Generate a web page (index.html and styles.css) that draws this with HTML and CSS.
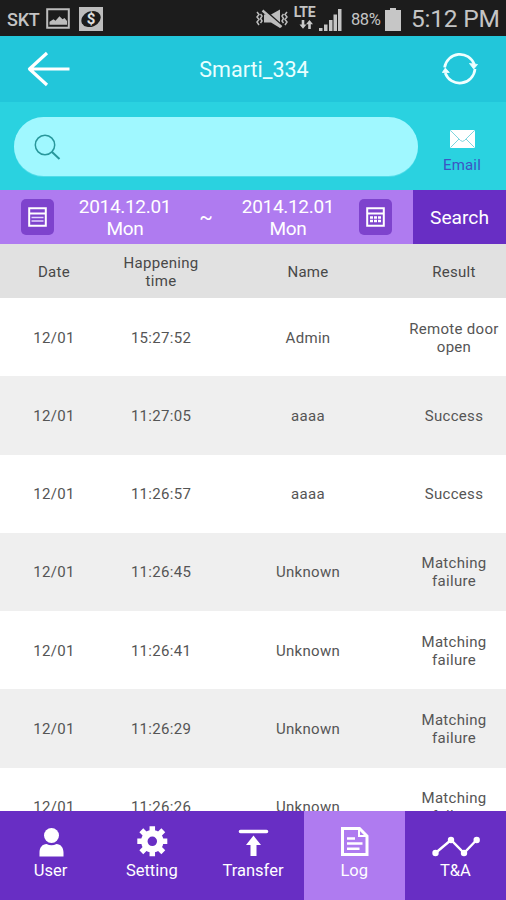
FILE: index.html
```html
<!DOCTYPE html>
<html lang="en">
<head>
<meta charset="utf-8">
<title>Smarti_334</title>
<link rel="stylesheet" href="styles.css">
</head>
<body>
<div class="phone">
  <div class="status">
    <span class="carrier">SKT</span>
    <svg class="picture" width="24" height="22" viewBox="0 0 24 22"><path d="M1.200 1.200h21.600v18.600H1.200z" fill="none" stroke="#bdbdbd" stroke-width="2"/><path d="M3.500 16.800v-3l4-2.600 2 1.500 4-4.400 3 3 2-1.300 2.500 3v3.800z" fill="#bdbdbd"/></svg>
    <svg class="money" width="24" height="24" viewBox="0 0 24 24"><path d="M0 0h24v24H0z" fill="#bdbdbd"/><ellipse cx="12" cy="12" rx="10" ry="7.600" transform="rotate(-25 12 12)" fill="#1c1c1c"/><text class="dollar" x="12" y="17" text-anchor="middle">$</text></svg>
    <span class="spacer"></span>
    <svg class="mute" width="34" height="22" viewBox="0 0 34 22"><g fill="none" stroke="#bdbdbd" stroke-width="1.500"><path d="M2 4l2 2.500-2 2.500 2 2.500-2 2.500 2 3M5.500 6l1.500 2-1.500 2.500 1.500 2.500-1.500 2M28.500 6l-1.500 2 1.500 2.500-1.500 2.500 1.500 2M32 4l-2 2.500 2 2.500-2 2.500 2 2.500-2 3"/></g><path d="M9 6.500h7L25 1.500v18.500l-9-5.500H9z" fill="#bdbdbd"/><path d="M9 1.500l19 17" stroke="#1c1c1c" stroke-width="2"/><path d="M7.500 2.500l19 16.500" stroke="#bdbdbd" stroke-width="2.400"/></svg>
    <span class="lte"><span>LTE</span><svg width="14" height="9" viewBox="0 0 14 9"><path d="M4 0v5M10.500 4v5" stroke="#c8c8c8" stroke-width="2.600"/><path d="M0.500 4.500h7L4 8.800zM7 4.200h7L10.500 0z" fill="#c8c8c8"/></svg></span>
    <svg class="signal" width="23" height="23" viewBox="0 0 23 23"><path d="M0 20h3.500v3H0zM5 16.500h3.500V23H5zM10 12h3.500v11H10zM14.500 6.500h3.500V23h-3.500zM19 1h3.500v22H19z" fill="#c4c4c4"/></svg>
    <span class="percent">88%</span>
    <svg class="battery" width="16" height="23" viewBox="0 0 16 23"><path d="M5 0h6v2h5v21H0V2h5z" fill="#c6c6c6"/></svg>
    <span class="clock">5:12 PM</span>
  </div>
  <header class="title-bar">
    <svg class="back" width="44" height="36" viewBox="0 0 44 36"><path d="M20 2L2.500 18 20 34M2.500 18h40" fill="none" stroke="#fff" stroke-width="3.200" stroke-linejoin="round"/></svg>
    <h1>Smarti_334</h1>
    <svg class="refresh" width="36" height="36" viewBox="0 0 36 36"><g fill="none" stroke="#f0ffff" stroke-width="2.700"><path d="M2.600 16.500A15.400 15.400 0 0 1 32.300 13.500M33 18A15.400 15.400 0 0 1 3.200 22"/></g><path d="M27.500 12.500l8 1-3.800 4.500zM.3 21.500l3-4.500 4 4.500z" fill="#f0ffff" stroke="#f0ffff" stroke-width=".8" stroke-linejoin="round"/></svg>
  </header>
  <div class="search-bar">
    <div class="field"><svg width="27" height="27" viewBox="0 0 27 27"><g fill="none" stroke="#28979b"><circle cx="11" cy="11" r="9.700" stroke-width="1.500"/><path d="M18 18l7.500 7" stroke-width="2"/></g></svg></div>
    <div class="email"><svg width="25" height="18" viewBox="0 0 25 18"><rect width="25" height="18" rx="1.500" fill="#fff"/><path d="M1 1l9.500 9.500q2 1.800 4 0L24 1M1 17l8-8M24 17l-8-8" fill="none" stroke="#7ed5de" stroke-width="1"/></svg><span>Email</span></div>
  </div>
  <div class="range">
    <div class="dates">
      <span class="cal"><svg width="19" height="20" viewBox="0 0 19 20"><path d="M1.200 1.200h16.600v17.600H1.200zM1 6.500h17" fill="none" stroke="#fff" stroke-width="2"/><path d="M3.500 10.500h12M3.500 14h12" stroke="#e4d5ff" stroke-width="1.500"/></svg></span>
      <span class="day">2014.12.01<br>Mon</span>
      <span class="tilde">~</span>
      <span class="day">2014.12.01<br>Mon</span>
      <span class="cal"><svg width="19" height="20" viewBox="0 0 19 20"><path d="M1.200 1.200h16.600v17.600H1.200zM1 6.500h17" fill="none" stroke="#fff" stroke-width="2"/><path d="M4 10.500h11M4 14h11" stroke="#fff" stroke-width="2.400" stroke-dasharray="3 1"/></svg></span>
    </div>
    <div class="go">Search</div>
  </div>
  <div class="row head"><span>Date</span><span>Happening<br>time</span><span>Name</span><span>Result</span></div>
  <main class="log">
    <div class="row"><span>12/01</span><span>15:27:52</span><span>Admin</span><span>Remote door<br>open</span></div>
    <div class="row"><span>12/01</span><span>11:27:05</span><span>aaaa</span><span>Success</span></div>
    <div class="row"><span>12/01</span><span>11:26:57</span><span>aaaa</span><span>Success</span></div>
    <div class="row"><span>12/01</span><span>11:26:45</span><span>Unknown</span><span>Matching<br>failure</span></div>
    <div class="row"><span>12/01</span><span>11:26:41</span><span>Unknown</span><span>Matching<br>failure</span></div>
    <div class="row"><span>12/01</span><span>11:26:29</span><span>Unknown</span><span>Matching<br>failure</span></div>
    <div class="row"><span>12/01</span><span>11:26:26</span><span>Unknown</span><span>Matching<br>failure</span></div>
  </main>
  <nav class="tabs">
    <div class="tab"><svg width="50" height="32" viewBox="0 0 50 32"><circle cx="25.500" cy="9.500" r="7.500" fill="#fff"/><path d="M13.500 30.500v-4c0-5 3-8.500 7-8.500q5 2.500 10 0c4 0 7 3.500 7 8.500v4z" fill="#fff"/></svg><span>User</span></div>
    <div class="tab"><svg width="50" height="32" viewBox="0 0 50 32"><g transform="translate(25.300 15.300)" fill="none" stroke="#fff"><circle r="8" stroke-width="6.500"/><path d="M0-10v-5M0 10v5M-10 0h-5M10 0h5M7-7l4-4M-7 7l-4 4M-7-7l-4-4M7 7l4 4" stroke-width="5.500"/></g></svg><span>Setting</span></div>
    <div class="tab"><svg width="50" height="32" viewBox="0 0 50 32"><path d="M12.500 3.700h26a1.800 1.800 0 0 1 0 3.600h-26a1.800 1.800 0 0 1 0-3.600zM25.500 9.500l7.500 9.500h-4.500V30h-6V19H18z" fill="#fff"/></svg><span>Transfer</span></div>
    <div class="tab active"><svg width="50" height="32" viewBox="0 0 50 32"><g fill="none" stroke="#fff" stroke-width="3"><path d="M13.500 2.500h17l7.500 7.500v18.500H13.500z"/><path d="M30 2.500v7.500h8" stroke-width="2"/><path d="M18 12.500h8M18 17.500h15.500M18 22.800h12.500" stroke-width="2.500"/></g></svg><span>Log</span></div>
    <div class="tab"><svg width="50" height="32" viewBox="-2 0 50 32"><path d="M3.500 27l15.500-13L32 27l12.500-13" fill="none" stroke="#fff" stroke-width="2.400"/><g fill="#fff"><circle cx="3.500" cy="27" r="3.200"/><circle cx="19" cy="14" r="3.200"/><circle cx="32" cy="27" r="3.200"/><circle cx="44.700" cy="14" r="3.200"/></g></svg><span>T&amp;A</span></div>
  </nav>
</div>
</body>
</html>
```
FILE: styles.css
```css
* { box-sizing: border-box; }
body { margin: 0; font-family: Roboto, sans-serif; }
svg { display: block; flex: none; }
.phone { width: 506px; height: 900px; display: flex; flex-direction: column; overflow: hidden; }
.status { height: 36px; flex: none; display: flex; align-items: center; background: #1c1c1c; color: #c4c4c4; padding: 2px 7px 0; white-space: nowrap; }
.carrier { width: 39px; font-size: 18px; font-weight: 500; letter-spacing: -.2px; }
.money { margin-left: 9px; }
.dollar { font-size: 15px; font-weight: 700; fill: #e0e0e0; }
.spacer { flex: 1; }
.lte { width: 25px; height: 28px; margin-left: 3px; display: flex; flex-direction: column; align-items: center; font-size: 14px; line-height: 14px; font-weight: 700; letter-spacing: -.3px; }
.lte svg { margin: 1px 0 0 2px; }
.signal { margin-left: 2px; }
.percent { width: 34px; margin-left: 9px; font-size: 16.500px; letter-spacing: -.4px; }
.clock { width: 88px; margin-left: 10px; padding-bottom: 1px; font-size: 24.500px; letter-spacing: -.2px; }
.title-bar { height: 66px; flex: none; display: flex; align-items: center; justify-content: space-between; padding: 0 28px 0 27px; background: #22c6da; color: #e9ffff; }
.title-bar h1 { margin: 0 5px 0 0; font-size: 21.500px; font-weight: 400; }
.search-bar { height: 88px; flex: none; display: flex; background: #2ad2e0; padding: 15px 23px 0 14px; justify-content: space-between; }
.field { width: 404px; height: 59px; border-radius: 30px; background: #a0f8ff; padding: 17px 0 0 20px; box-shadow: 0 1px #51dce9; }
.email { width: 42px; display: flex; flex-direction: column; align-items: center; padding-top: 13px; font-size: 15px; line-height: 18px; color: #3d55c4; }
.email span { margin-top: 8px; letter-spacing: .2px; }
.range { height: 54px; flex: none; display: flex; color: #fff; }
.dates { width: 413px; display: flex; align-items: center; padding-left: 21px; background: #af7bf0; }
.cal { width: 33px; height: 36px; flex: none; border-radius: 5px; background: #7e43cd; display: grid; place-items: center; }
.day { width: 118px; margin-left: 12px; padding-top: 1px; text-align: center; font-size: 19px; line-height: 22px; letter-spacing: -.3px; }
.tilde { width: 20px; margin-left: 12px; text-align: center; font-size: 20px; }
.tilde + .day { margin-left: 13px; }
.day + .cal { margin-left: 12px; }
.go { flex: 1; background: #682ec4; display: grid; place-items: center; font-size: 19.200px; padding-top: 1px; }
.row { display: grid; grid-template-columns: 108px 106px 188px 104px; align-items: center; height: 78.25px; padding-top: 1px; text-align: center; font-size: 15px; line-height: 18px; letter-spacing: .3px; color: #555; background: #fff; }
.row.head { height: 54px; flex: none; background: #e1e1e1; color: #484848; }
.log { flex: 1; min-height: 0; overflow: hidden; }
.log .row:nth-child(even) { background: #efefef; }
.tabs { height: 89px; flex: none; display: grid; grid-template-columns: repeat(5, 1fr); background: #682ec4; color: #fff; }
.tab { display: flex; flex-direction: column; align-items: center; padding-top: 15px; font-size: 16.500px; line-height: 20px; }
.tab span { margin-top: 3px; }
.tab.active { background: #af7bf0; }
```
